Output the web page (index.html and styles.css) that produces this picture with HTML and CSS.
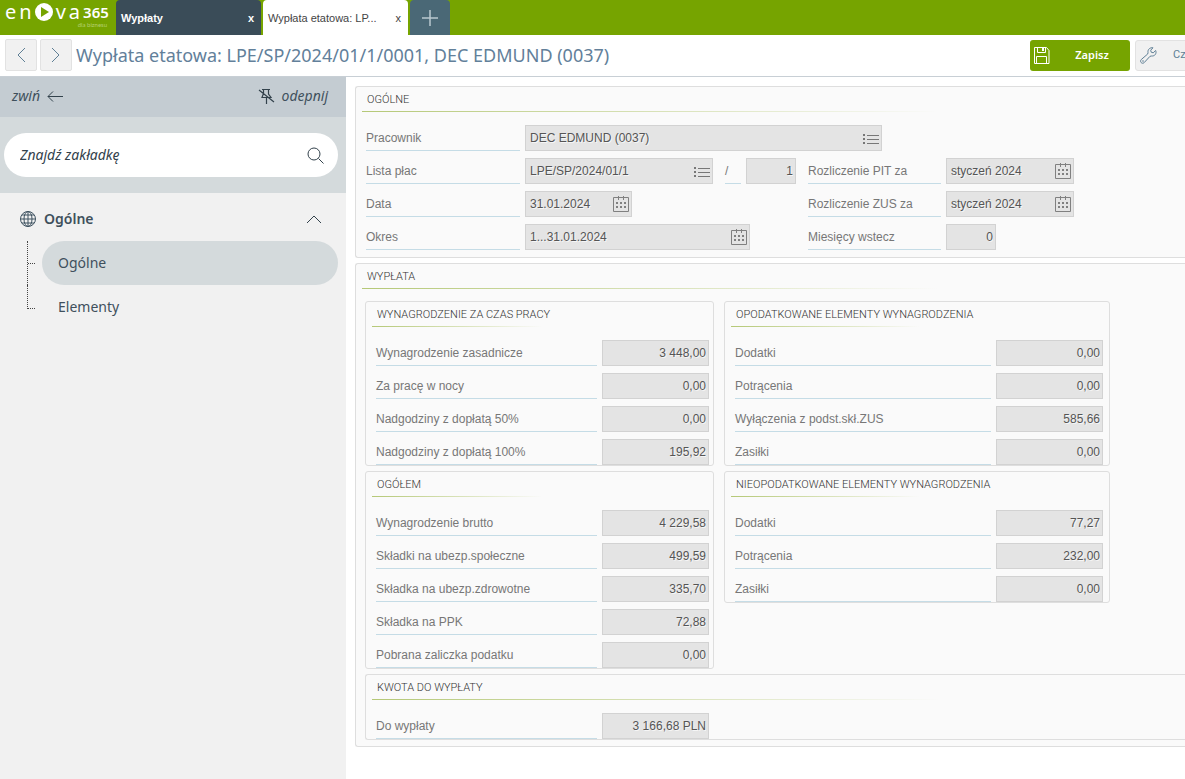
FILE: index.html
```html
<!DOCTYPE html>
<html lang="pl">
<head>
<meta charset="utf-8">
<title>Wypłata etatowa</title>
<link rel="stylesheet" href="styles.css">
</head>
<body>
<svg class="sprite" aria-hidden="true">
  <symbol id="list" viewBox="0 0 16 12"><path d="M4 1.500h12M4 5.500h12M4 9.500h12" stroke="#777" fill="none"/><path d="M0 0h2v2H0zM0 4h2v2H0zM0 8h2v2H0z" fill="#777"/></symbol>
  <symbol id="calendar" viewBox="0 0 16 16"><path d="M.5 1.500h15v14H.5zM5.500 0v4M10.500 0v4" stroke="#808080" fill="none"/><path d="M3 6h2v2H3zM7 6h2v2H7zM11 6h2v2h-2zM3 10h2v2H3zM7 10h2v2H7zM11 10h2v2h-2z" fill="#808080"/></symbol>
</svg>
<header class="topbar">
  <div class="logo">
    <div class="brand"><span>e</span><span>n</span><svg width="18" height="18" viewBox="0 0 18 18"><circle cx="9" cy="9" r="9" fill="#fff"/><path d="M6 4l8 5-8 5z" fill="#76a400"/></svg><span>v</span><span>a</span><b>365</b></div>
    <small>dla biznesu</small>
  </div>
  <nav class="tabs">
    <div class="tab tab-dark"><span>Wypłaty</span><button type="button" aria-label="Zamknij Wypłaty">x</button></div>
    <div class="tab tab-active"><span>Wypłata etatowa: LP...</span><button type="button" aria-label="Zamknij Wypłata etatowa">x</button></div>
    <button type="button" class="tab-add" aria-label="Nowa karta"><svg width="16" height="16" viewBox="0 0 16 16"><path d="M8 0v16M0 8h16" stroke="#b9c8cf" stroke-width="1.500"/></svg></button>
  </nav>
</header>
<div class="titlebar">
  <button type="button" class="nav-btn" aria-label="Wstecz"><svg width="10" height="16" viewBox="0 0 10 16"><path d="M9 1L2 8l7 7" stroke="#5f7f95" fill="none"/></svg></button>
  <button type="button" class="nav-btn" aria-label="Dalej"><svg width="10" height="16" viewBox="0 0 10 16"><path d="M1 1l7 7-7 7" stroke="#5f7f95" fill="none"/></svg></button>
  <h1>Wypłata etatowa: LPE/SP/2024/01/1/0001, DEC EDMUND (0037)</h1>
  <div class="actions">
    <button type="button" class="action save"><svg width="16" height="17" viewBox="0 0 16 17"><path d="M.5.5h12l2.500 3v13H.5zM3.500.500v5h8v-5M2.500 16.500v-7h10v7" stroke="#fff" fill="none"/><path d="M8 1h2v3H8z" fill="#fff"/></svg><span>Zapisz</span></button>
    <button type="button" class="action more"><svg width="17" height="17" viewBox="0 0 17 17"><path d="M15.700 3.500l-2.500 2.300-2-.6-.5-2L13 .8C10.500.3 7.500 2 8 5.500L7.700 7 1.300 12.500c-2 2 .6 5 2.800 3.200L10 9.300l1.500-.3c3.500.3 5.300-2.500 4.200-5.500z" stroke="#5f7f95" fill="none"/><circle cx="3" cy="14" r=".8" fill="#5f7f95"/></svg><span>Cz</span></button>
  </div>
</div>
<div class="workspace">
  <aside class="sidebar">
    <div class="side-tools">
      <button type="button">zwiń <svg width="16" height="12" viewBox="0 0 16 12"><path d="M16 6.500H1M6 1.500l-5 5 5 5" stroke="#33424c" fill="none"/></svg></button>
      <button type="button"><svg width="17" height="17" viewBox="0 0 17 17"><path d="M4 1.500h8M5.500 1.500v4L4 9.500h9L10.500 6V1.500M8.500 10v6M1 2l15 12" stroke="#33424c" stroke-width="1.200" fill="none"/></svg> odepnij</button>
    </div>
    <div class="search-area">
      <label class="search"><input type="text" placeholder="Znajdź zakładkę" aria-label="Znajdź zakładkę"><svg width="17" height="17" viewBox="0 0 17 17"><circle cx="7" cy="7" r="6" stroke="#33424c" fill="none"/><path d="M11.500 11.500l5 5" stroke="#33424c"/></svg></label>
    </div>
    <nav class="menu">
      <button type="button" class="menu-head"><svg width="16" height="16" viewBox="0 0 16 16"><g stroke="#3f5361" fill="none"><circle cx="8" cy="8" r="7.500"/><ellipse cx="8" cy="8" rx="4" ry="7.500"/><path d="M8 .5v15M.5 8h15M2 4h12M2 12h12"/></g></svg><span>Ogólne</span><svg width="16" height="9" viewBox="0 0 16 9"><path d="M1 8l7-7 7 7" stroke="#33424c" fill="none"/></svg></button>
      <ul>
        <li><a href="#ogolne" class="current">Ogólne</a></li>
        <li><a href="#elementy">Elementy</a></li>
      </ul>
    </nav>
  </aside>
  <main>
    <section class="panel" id="ogolne">
      <h2>Ogólne</h2>
      <div class="general">
        <div class="rows left">
          <div class="row"><label for="f1">Pracownik</label><div class="field wide"><input id="f1" readonly value="DEC EDMUND (0037)"><svg class="ic-list"><use href="#list"/></svg></div></div>
          <div class="row"><label for="f2">Lista płac</label><div class="field list"><input id="f2" readonly value="LPE/SP/2024/01/1"><svg class="ic-list"><use href="#list"/></svg></div><label for="f3" class="slash">/</label><div class="field num"><input id="f3" readonly value="1"></div></div>
          <div class="row"><label for="f4">Data</label><div class="field date"><input id="f4" readonly value="31.01.2024"><svg class="ic-cal"><use href="#calendar"/></svg></div></div>
          <div class="row"><label for="f5">Okres</label><div class="field period"><input id="f5" readonly value="1...31.01.2024"><svg class="ic-cal"><use href="#calendar"/></svg></div></div>
        </div>
        <div class="rows right">
          <div class="row"><label for="f6">Rozliczenie PIT za</label><div class="field month"><input id="f6" readonly value="styczeń 2024"><svg class="ic-cal"><use href="#calendar"/></svg></div></div>
          <div class="row"><label for="f7">Rozliczenie ZUS za</label><div class="field month"><input id="f7" readonly value="styczeń 2024"><svg class="ic-cal"><use href="#calendar"/></svg></div></div>
          <div class="row"><label for="f8">Miesięcy wstecz</label><div class="field num"><input id="f8" readonly value="0"></div></div>
        </div>
      </div>
    </section>
    <section class="panel" id="elementy">
      <h2>Wypłata</h2>
      <div class="pay">
        <div class="columns">
          <div class="col col-a">
            <section class="panel sub">
              <h3>Wynagrodzenie za czas pracy</h3>
              <div class="rows">
                <div class="row"><label for="a1">Wynagrodzenie zasadnicze</label><div class="field money"><input id="a1" readonly value="3 448,00"></div></div>
                <div class="row"><label for="a2">Za pracę w nocy</label><div class="field money"><input id="a2" readonly value="0,00"></div></div>
                <div class="row"><label for="a3">Nadgodziny z dopłatą 50%</label><div class="field money"><input id="a3" readonly value="0,00"></div></div>
                <div class="row"><label for="a4">Nadgodziny z dopłatą 100%</label><div class="field money"><input id="a4" readonly value="195,92"></div></div>
              </div>
            </section>
            <section class="panel sub">
              <h3>Ogółem</h3>
              <div class="rows">
                <div class="row"><label for="b1">Wynagrodzenie brutto</label><div class="field money"><input id="b1" readonly value="4 229,58"></div></div>
                <div class="row"><label for="b2">Składki na ubezp.społeczne</label><div class="field money"><input id="b2" readonly value="499,59"></div></div>
                <div class="row"><label for="b3">Składka na ubezp.zdrowotne</label><div class="field money"><input id="b3" readonly value="335,70"></div></div>
                <div class="row"><label for="b4">Składka na PPK</label><div class="field money"><input id="b4" readonly value="72,88"></div></div>
                <div class="row"><label for="b5">Pobrana zaliczka podatku</label><div class="field money"><input id="b5" readonly value="0,00"></div></div>
              </div>
            </section>
          </div>
          <div class="col col-b">
            <section class="panel sub">
              <h3>Opodatkowane elementy wynagrodzenia</h3>
              <div class="rows">
                <div class="row"><label for="c1">Dodatki</label><div class="field money"><input id="c1" readonly value="0,00"></div></div>
                <div class="row"><label for="c2">Potrącenia</label><div class="field money"><input id="c2" readonly value="0,00"></div></div>
                <div class="row"><label for="c3">Wyłączenia z podst.skł.ZUS</label><div class="field money"><input id="c3" readonly value="585,66"></div></div>
                <div class="row"><label for="c4">Zasiłki</label><div class="field money"><input id="c4" readonly value="0,00"></div></div>
              </div>
            </section>
            <section class="panel sub">
              <h3>Nieopodatkowane elementy wynagrodzenia</h3>
              <div class="rows">
                <div class="row"><label for="d1">Dodatki</label><div class="field money"><input id="d1" readonly value="77,27"></div></div>
                <div class="row"><label for="d2">Potrącenia</label><div class="field money"><input id="d2" readonly value="232,00"></div></div>
                <div class="row"><label for="d3">Zasiłki</label><div class="field money"><input id="d3" readonly value="0,00"></div></div>
              </div>
            </section>
          </div>
        </div>
        <section class="panel sub total">
          <h3>Kwota do wypłaty</h3>
          <div class="rows">
            <div class="row"><label for="e1">Do wypłaty</label><div class="field money"><input id="e1" readonly value="3 166,68 PLN"></div></div>
          </div>
        </section>
      </div>
    </section>
  </main>
</div>
</body>
</html>
```
FILE: styles.css
```css
* { box-sizing: border-box; }
body {
  margin: 0;
  min-height: 100vh;
  display: flex;
  flex-direction: column;
  overflow-x: hidden;
  background: #fff;
  color: #6e6e6e;
  font: 12px/16px "Liberation Sans", sans-serif;
}
button { margin: 0; padding: 0; border: 0; background: none; color: inherit; font: inherit; }
h1, h2, h3, ul { margin: 0; padding: 0; font-weight: 400; }
svg { flex: none; display: block; }
.sprite { position: absolute; width: 0; height: 0; }

.topbar { display: flex; height: 35px; background: #76a400; }
.logo { width: 116px; padding: 2px 0 0 5px; color: #fff; font-family: Lato, sans-serif; }
.brand { display: flex; align-items: center; height: 20px; gap: 3px; font: 20px/20px "Noto Sans", sans-serif; }
.brand b { font: 600 15px/20px "Noto Sans", sans-serif; }
.logo small { display: block; width: 102px; font-size: 6px; line-height: 6px; text-align: right; color: #b5d070; }
.tabs { display: flex; gap: 2px; }
.tab { display: flex; align-items: center; justify-content: space-between; width: 145px; padding: 0 7px 0 5px; border-radius: 4px 4px 0 0; }
.tab-dark { background: #3a4c58; color: #fff; font-weight: 700; font-size: 11px; }
.tab-active { background: #fff; color: #444; font-size: 11px; }
.tab-add { display: grid; place-items: center; width: 40px; border-radius: 4px 4px 0 0; background: #4a6876; }

.titlebar { display: flex; align-items: center; height: 42px; padding: 0 0 2px 5px; gap: 2px; border-bottom: 1px solid #c8cfd5; overflow: hidden; }
.nav-btn { flex: none; display: grid; place-items: center; width: 32px; height: 32px; border: 1px solid #e2e2e2; border-radius: 2px; background: #f1f1f1; }
.nav-btn + .nav-btn { margin-left: 1px; }
h1 { margin-left: 2px; color: #62809a; font: 18px/24px "Noto Sans", sans-serif; white-space: nowrap; }
.actions { display: flex; gap: 5px; width: 155px; margin-left: auto; padding-top: 1px; flex: none; }
.action { flex: none; display: flex; align-items: center; width: 100px; height: 31px; padding-left: 4px; border-radius: 3px; font: 600 11px/16px "Noto Sans", sans-serif; }
.action span { flex: 1; padding-left: 4px; text-align: center; }
.save { background: #76a400; color: #fff; }
.more { border: 1px solid #e2e2e2; background: #f1f1f1; color: #5f7f95; font: 11px/16px Roboto, sans-serif; }
.more span { padding-left: 16px; text-align: left; }

.workspace { flex: 1; display: flex; }
.sidebar { flex: none; width: 346px; background: #f1f1f1; color: #3f505c; font: 14px/20px "Noto Sans", sans-serif; }
.side-tools { display: flex; justify-content: space-between; height: 40px; padding: 0 18px 2px 12px; background: #c4ccd2; font-style: italic; }
.side-tools button { display: flex; align-items: center; gap: 7px; }
.search-area { padding: 16px 8px 16px 4px; background: #d4dadc; }
.search { display: flex; align-items: center; height: 44px; padding: 0 14px 0 16px; border-radius: 22px; background: #fff; }
.search input { flex: 1; min-width: 0; padding: 0; border: 0; outline: 0; background: none; color: #33424c; font: italic 14px/20px "Noto Sans", sans-serif; }
.search input::placeholder { color: #33424c; opacity: 1; }
.menu { padding: 4px 8px 0 20px; }
.menu-head { display: flex; align-items: center; gap: 8px; width: 100%; height: 44px; padding-right: 16px; font-weight: 600; }
.menu-head span { flex: 1; text-align: left; }
.menu ul { list-style: none; }
.menu li { display: flex; align-items: center; padding-left: 7px; }
.menu li::before { content: ""; width: 7px; height: 23px; align-self: flex-start; border: 1px dotted #444; border-width: 0 0 1px 1px; }
.menu li:first-child::before { height: 44px; border-bottom: 0; background: linear-gradient(90deg, #444 50%, transparent 50%) 0 22px / 2px 1px repeat-x; }
.menu a { flex: 1; height: 44px; margin-left: 7px; padding: 12px 16px; border-radius: 22px; color: inherit; text-decoration: none; }
.menu .current { background: #d4dadc; }

main { flex: 1; min-width: 0; display: flex; flex-direction: column; gap: 5px; padding: 9px 0 0 9px; }
.panel { border: 1px solid #dedede; border-right: 0; border-radius: 3px 0 0 3px; background: #fafafa; }
h2, h3 { height: 25px; margin-left: 6px; padding: 4px 5px; font: 300 11px/18px Roboto, sans-serif; text-transform: uppercase; color: #333; background: linear-gradient(90deg, #b5c877, #e5ebd0 70%, transparent) 0 100% / 70% 1px no-repeat; }
h3 { background-size: 50% 1px; }
.total h3 { background-size: 70% 1px; }
.general { display: flex; gap: 12px; padding: 13px 0 7px 10px; }
.rows { display: flex; flex-direction: column; gap: 7px; }
.left { width: 430px; }
.right { align-self: flex-end; }
.row { display: flex; gap: 5px; height: 26px; }
.row label { flex: none; padding-top: 5px; border-bottom: 1px solid #c5dce6; color: #777; }
.left label { width: 154px; }
.right label { width: 133px; }
.left .slash { width: 16px; margin-left: 7px; }
.field { flex: none; display: flex; align-items: center; padding: 0 2px 0 4px; border: 1px solid #d2d2d2; background: #e4e4e4; }
.field input { flex: 1; width: 0; min-width: 0; padding: 0; border: 0; outline: 0; background: none; color: #555; font: inherit; text-shadow: 1px 1px #f6f6f6; }
.wide { width: 357px; }
.list { width: 188px; }
.date { width: 107px; }
.period { width: 225px; }
.month { width: 128px; }
.num { width: 50px; }
.money { width: 107px; }
.num input, .money input { text-align: right; }
.ic-list { width: 16px; height: 12px; margin-top: 4px; }
.ic-cal { width: 16px; height: 16px; }

.pay { display: flex; flex-direction: column; gap: 5px; padding: 12px 0 6px 9px; }
.columns { display: flex; gap: 10px; }
.col { display: flex; flex-direction: column; align-items: stretch; gap: 5px; }
.col-a { width: 349px; }
.col-b { width: 386px; }
.sub .rows { padding: 13px 4px 0 10px; }
.col .sub { border-right: 1px solid #dedede; border-radius: 3px; }
.col label { flex: 1; }
.col-b .rows { padding-right: 6px; }
.total label { width: 221px; }
```
